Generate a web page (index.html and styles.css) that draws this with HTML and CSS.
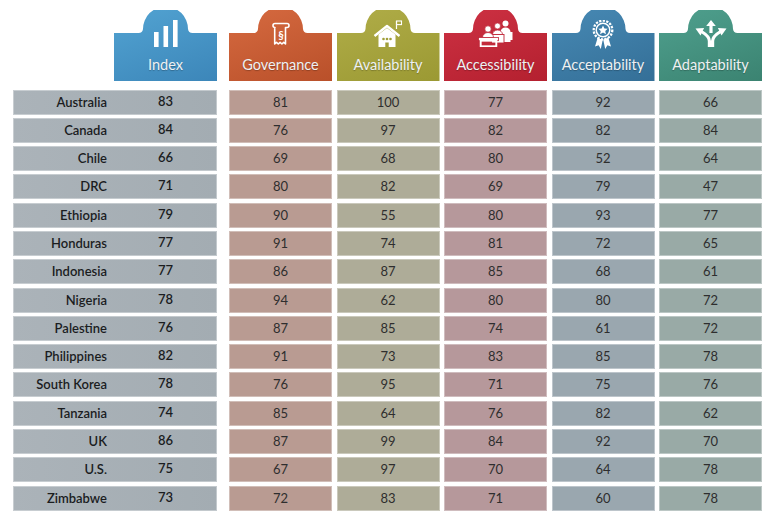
FILE: index.html
```html
<!DOCTYPE html>
<html lang="en">
<head>
<meta charset="utf-8">
<title>Scores</title>
<link rel="stylesheet" href="styles.css">
</head>
<body>
<div class="page">
  <div class="head-row">
    <div class="head-spacer"></div>
    <div class="tab tab-index">
      <div class="ico-box">
        <svg viewBox="0 0 26 28" width="26" height="28">
          <rect x="1" y="12" width="4.6" height="15" fill="#fff"/>
          <rect x="10.5" y="6" width="4.6" height="21" fill="#fff"/>
          <rect x="20" y="0" width="4.6" height="27" fill="#fff"/>
        </svg>
      </div>
      <span class="tab-label">Index</span>
    </div>
    <div class="tab-group">
      <div class="tab tab-gov">
        <div class="ico-box">
          <svg viewBox="0 0 22 28" width="22" height="28">
            <path d="M5 3.5h12a2 2 0 0 1 0 4h-1.5V24l-1.8-1.6-1.8 1.6-1.8-1.6-1.8 1.6-1.8-1.6-1.8 1.6V7.5H5a2 2 0 0 1 0-4z" fill="none" stroke="#fff" stroke-width="1.6" stroke-linejoin="round"/>
            <text x="11" y="18.5" text-anchor="middle" font-family="Lato, sans-serif" font-size="11" font-weight="700" fill="#fff">§</text>
          </svg>
        </div>
        <span class="tab-label">Governance</span>
      </div>
      <div class="tab tab-avail">
        <div class="ico-box">
          <svg viewBox="0 0 30 28" width="30" height="28">
            <line x1="23.5" y1="1" x2="23.5" y2="9" stroke="#fff" stroke-width="1.2"/>
            <rect x="23.5" y="1" width="5" height="3.6" fill="none" stroke="#fff" stroke-width="1.1"/>
            <polyline points="1.5,16 14,6 26.5,16" fill="none" stroke="#fff" stroke-width="2.4" stroke-linejoin="round"/>
            <path d="M5.5 14.5L14 8l8.5 6.5V27h-17z" fill="#fff"/>
            <circle cx="10.5" cy="19" r="1.3" fill="#a09e38"/>
            <circle cx="14" cy="19" r="1.3" fill="#a09e38"/>
            <circle cx="17.5" cy="19" r="1.3" fill="#a09e38"/>
            <rect x="12.3" y="22.5" width="3.4" height="4.5" fill="#a09e38"/>
          </svg>
        </div>
        <span class="tab-label">Availability</span>
      </div>
      <div class="tab tab-access">
        <div class="ico-box">
          <svg viewBox="0 0 36 27" width="37" height="27">
            <circle cx="28" cy="3.5" r="3" fill="#fff"/>
            <path d="M23 12a5 4.5 0 0 1 10 0z" fill="#fff"/>
            <rect x="22.5" y="12" width="12.5" height="8" fill="#fff"/>
            <rect x="25" y="20" width="8" height="2" fill="#fff"/>
            <circle cx="20" cy="6" r="3" fill="#fff" stroke="#bf2638" stroke-width="0.7"/>
            <path d="M15 14.5a5 4.5 0 0 1 10 0z" fill="#fff" stroke="#bf2638" stroke-width="0.8"/>
            <rect x="14" y="14.5" width="12.5" height="8.5" fill="#fff" stroke="#bf2638" stroke-width="0.9"/>
            <circle cx="10.5" cy="9" r="3.2" fill="#fff" stroke="#bf2638" stroke-width="0.7"/>
            <path d="M5 17.5a5.5 5 0 0 1 11 0z" fill="#fff" stroke="#bf2638" stroke-width="0.8"/>
            <rect x="1" y="17.5" width="20" height="3.2" fill="#fff" stroke="#bf2638" stroke-width="0.8"/>
            <rect x="3.2" y="20.7" width="15.6" height="5.6" fill="none" stroke="#fff" stroke-width="1.9"/>
          </svg>
        </div>
        <span class="tab-label">Accessibility</span>
      </div>
      <div class="tab tab-accept">
        <div class="ico-box">
          <svg viewBox="0 0 24 30" width="24" height="30">
            <path d="M7.5 15L4 26.5l3.6-1.2L9.8 29l2-9.5z" fill="#fff"/>
            <path d="M16.5 15L20 26.5l-3.6-1.2L14.2 29l-2-9.5z" fill="#fff"/>
            <circle cx="12" cy="10" r="9.3" fill="#3b7ca6" stroke="#fff" stroke-width="2.3" stroke-dasharray="2.3 1.3"/>
            <circle cx="12" cy="10" r="6.8" fill="none" stroke="#fff" stroke-width="1.5"/>
            <path d="M12 5.4l1.4 3 3.3.35-2.45 2.2.7 3.2L12 12.55l-2.95 1.6.7-3.2L7.3 8.75l3.3-.35z" fill="#fff"/>
          </svg>
        </div>
        <span class="tab-label">Acceptability</span>
      </div>
      <div class="tab tab-adapt">
        <div class="ico-box">
          <svg viewBox="0 0 32 28" width="32" height="28">
            <path d="M16 0l-4.8 6h3.2v7h3.2v-7h3.2z" fill="#fff"/>
            <path d="M14.4 27V21c0-4-3-6.5-8-9.5" fill="none" stroke="#fff" stroke-width="3.2"/>
            <path d="M0.5 8.5l8.6-0.6-3.6 7.5z" fill="#fff"/>
            <path d="M17.6 27V21c0-4 3-6.5 8-9.5" fill="none" stroke="#fff" stroke-width="3.2"/>
            <path d="M31.5 8.5l-8.6-0.6 3.6 7.5z" fill="#fff"/>
          </svg>
        </div>
        <span class="tab-label">Adaptability</span>
      </div>
    </div>
  </div>

  <div class="rows">
    <div class="row"><div class="country"><span class="name">Australia</span><span class="idx">83</span></div><div class="metrics"><div class="cell gov">81</div><div class="cell avail">100</div><div class="cell access">77</div><div class="cell accept">92</div><div class="cell adapt">66</div></div></div>
    <div class="row"><div class="country"><span class="name">Canada</span><span class="idx">84</span></div><div class="metrics"><div class="cell gov">76</div><div class="cell avail">97</div><div class="cell access">82</div><div class="cell accept">82</div><div class="cell adapt">84</div></div></div>
    <div class="row"><div class="country"><span class="name">Chile</span><span class="idx">66</span></div><div class="metrics"><div class="cell gov">69</div><div class="cell avail">68</div><div class="cell access">80</div><div class="cell accept">52</div><div class="cell adapt">64</div></div></div>
    <div class="row"><div class="country"><span class="name">DRC</span><span class="idx">71</span></div><div class="metrics"><div class="cell gov">80</div><div class="cell avail">82</div><div class="cell access">69</div><div class="cell accept">79</div><div class="cell adapt">47</div></div></div>
    <div class="row"><div class="country"><span class="name">Ethiopia</span><span class="idx">79</span></div><div class="metrics"><div class="cell gov">90</div><div class="cell avail">55</div><div class="cell access">80</div><div class="cell accept">93</div><div class="cell adapt">77</div></div></div>
    <div class="row"><div class="country"><span class="name">Honduras</span><span class="idx">77</span></div><div class="metrics"><div class="cell gov">91</div><div class="cell avail">74</div><div class="cell access">81</div><div class="cell accept">72</div><div class="cell adapt">65</div></div></div>
    <div class="row"><div class="country"><span class="name">Indonesia</span><span class="idx">77</span></div><div class="metrics"><div class="cell gov">86</div><div class="cell avail">87</div><div class="cell access">85</div><div class="cell accept">68</div><div class="cell adapt">61</div></div></div>
    <div class="row"><div class="country"><span class="name">Nigeria</span><span class="idx">78</span></div><div class="metrics"><div class="cell gov">94</div><div class="cell avail">62</div><div class="cell access">80</div><div class="cell accept">80</div><div class="cell adapt">72</div></div></div>
    <div class="row"><div class="country"><span class="name">Palestine</span><span class="idx">76</span></div><div class="metrics"><div class="cell gov">87</div><div class="cell avail">85</div><div class="cell access">74</div><div class="cell accept">61</div><div class="cell adapt">72</div></div></div>
    <div class="row"><div class="country"><span class="name">Philippines</span><span class="idx">82</span></div><div class="metrics"><div class="cell gov">91</div><div class="cell avail">73</div><div class="cell access">83</div><div class="cell accept">85</div><div class="cell adapt">78</div></div></div>
    <div class="row"><div class="country"><span class="name">South Korea</span><span class="idx">78</span></div><div class="metrics"><div class="cell gov">76</div><div class="cell avail">95</div><div class="cell access">71</div><div class="cell accept">75</div><div class="cell adapt">76</div></div></div>
    <div class="row"><div class="country"><span class="name">Tanzania</span><span class="idx">74</span></div><div class="metrics"><div class="cell gov">85</div><div class="cell avail">64</div><div class="cell access">76</div><div class="cell accept">82</div><div class="cell adapt">62</div></div></div>
    <div class="row"><div class="country"><span class="name">UK</span><span class="idx">86</span></div><div class="metrics"><div class="cell gov">87</div><div class="cell avail">99</div><div class="cell access">84</div><div class="cell accept">92</div><div class="cell adapt">70</div></div></div>
    <div class="row"><div class="country"><span class="name">U.S.</span><span class="idx">75</span></div><div class="metrics"><div class="cell gov">67</div><div class="cell avail">97</div><div class="cell access">70</div><div class="cell accept">64</div><div class="cell adapt">78</div></div></div>
    <div class="row"><div class="country"><span class="name">Zimbabwe</span><span class="idx">73</span></div><div class="metrics"><div class="cell gov">72</div><div class="cell avail">83</div><div class="cell access">71</div><div class="cell accept">60</div><div class="cell adapt">78</div></div></div>
  </div>
</div>
</body>
</html>
```

FILE: styles.css
```css
html, body {
  margin: 0;
  padding: 0;
  background: #ffffff;
}

body {
  font-family: Lato, "Open Sans", sans-serif;
  width: 768px;
  height: 511px;
  overflow: hidden;
}

.page {
  padding: 10px 0 0 13px;
}

.head-row {
  display: flex;
  height: 71px;
}

.head-spacer {
  width: 101px;
  flex: none;
}

.tab-group {
  display: flex;
  gap: 4.5px;
  margin-left: 12px;
}

.tab {
  width: 103px;
  height: 71px;
  flex: none;
  display: flex;
  flex-direction: column;
  align-items: center;
  clip-path: path('M0 23H24.5Q28.5 23 29 19A22.5 22.5 0 1 1 74 19Q74.5 23 78.5 23H103V71H0Z');
}

.ico-box {
  height: 28px;
  margin-top: 10px;
  flex: none;
  display: flex;
  justify-content: center;
  align-items: flex-start;
}

.ico-box svg {
  display: block;
  flex: none;
}

.tab-label {
  margin-top: 9px;
  font-size: 14.5px;
  line-height: 16px;
  color: #eef1f3;
  text-shadow: 0 1px 1px rgba(0, 0, 0, 0.25);
}

.tab-index  { background: linear-gradient(160deg, #52a3d2 0%, #3c86b9 100%); }
.tab-gov    { background: linear-gradient(160deg, #d66a40 0%, #b9502a 100%); }
.tab-avail  { background: linear-gradient(160deg, #b0ad48 0%, #9b9933 100%); }
.tab-access { background: linear-gradient(160deg, #cd3143 0%, #b4202f 100%); }
.tab-accept { background: linear-gradient(160deg, #4789b4 0%, #346f97 100%); }
.tab-adapt  { background: linear-gradient(160deg, #4fa08e 0%, #3b8371 100%); }

.rows {
  display: flex;
  flex-direction: column;
  gap: 3.3px;
  margin-top: 8.5px;
}

.row {
  display: flex;
  height: 25px;
}

.country {
  width: 204px;
  flex: none;
  display: flex;
  background: linear-gradient(90deg, #abb3b9 0%, #a3acb2 100%);
  box-shadow: inset 0 0 0 1px rgba(255, 255, 255, 0.35);
  color: #1b1d1f;
  font-weight: 600;
  font-size: 13px;
  line-height: 25px;
}

.name {
  width: 101px;
  padding-right: 7px;
  box-sizing: border-box;
  text-align: right;
}

.idx {
  width: 103px;
  text-align: center;
  line-height: 23px;
}

.metrics {
  display: flex;
  gap: 4.5px;
  margin-left: 12px;
}

.cell {
  width: 103px;
  flex: none;
  text-align: center;
  font-size: 13px;
  line-height: 25px;
  color: #2e2e2e;
  box-shadow: inset 0 0 0 1px rgba(255, 255, 255, 0.35);
}

.gov    { background: #b99b92; }
.avail  { background: #aeac98; }
.access { background: #b6989b; }
.accept { background: #9aa7af; }
.adapt  { background: #99aaa6; }
```
